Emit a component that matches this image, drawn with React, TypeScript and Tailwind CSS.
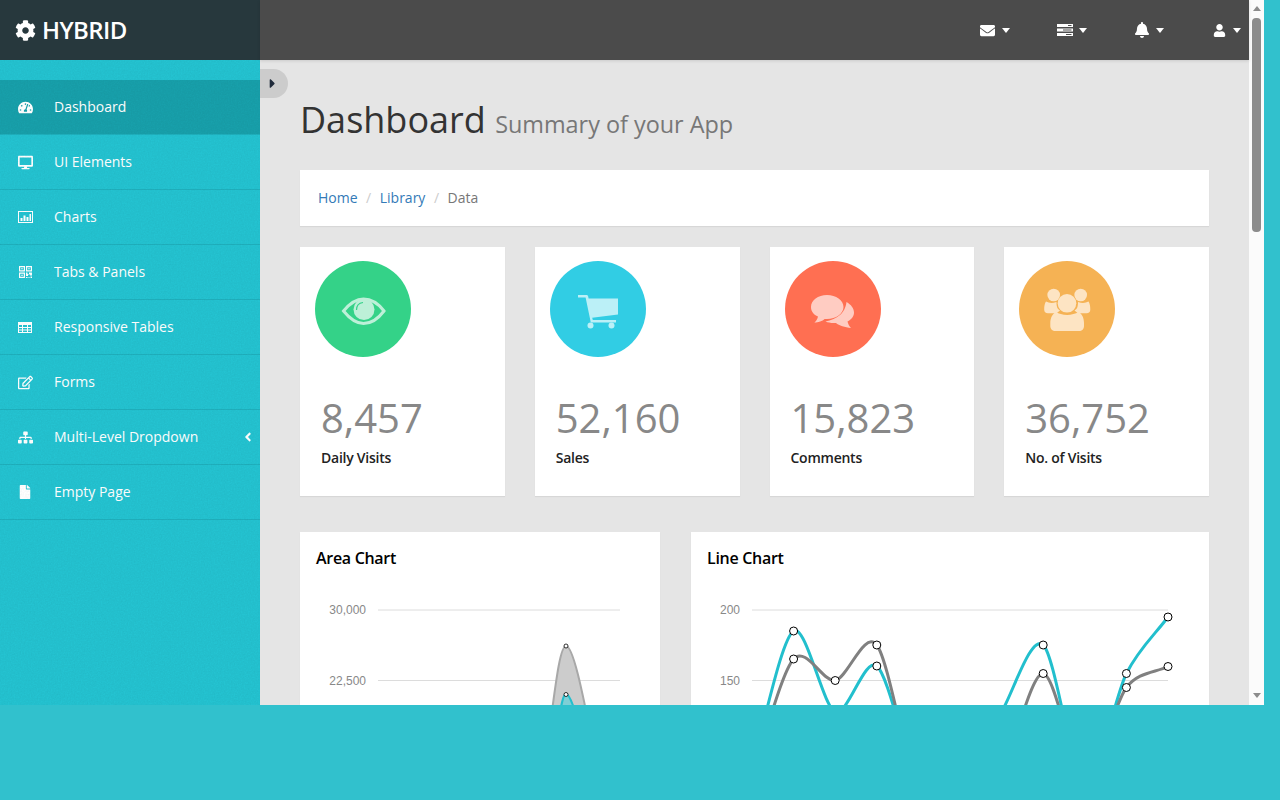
import {
  FaAngleLeft,
  FaBell,
  FaCaretRight,
  FaCog,
  FaDesktop,
  FaEnvelope,
  FaFile,
  FaRegEdit,
  FaSitemap,
  FaTachometerAlt,
  FaUser,
} from 'react-icons/fa';
import type { ReactNode } from 'react';

const BarsIcon = () => (
  <svg viewBox="0 0 15 12" className="w-[15px] h-3" fill="#fff">
    <path fillRule="evenodd" d="M0 0H15V12H0ZM1 1V11H14V1Z" />
    <path d="M2.500 7H4.500V10H2.500ZM5.500 4.500H7.500V10H5.500ZM8.500 6H10.500V10H8.500ZM11.500 3H13V10H11.500Z" />
  </svg>
);

const QrIcon = () => (
  <svg viewBox="0 0 13 12" className="w-[13px] h-3 ml-px" fill="#fff">
    <path fillRule="evenodd" d="M0 0H6V5.500H0ZM1.200 1.200V4.300H4.800V1.200ZM7 0H13V5.500H7ZM8.200 1.200V4.300H11.800V1.200ZM0 6.500H6V12H0ZM1.200 7.700V10.800H4.800V7.700Z" />
    <path d="M2.200 2.200H3.800V3.300H2.200ZM9.200 2.200H10.800V3.300H9.200ZM2.200 8.700H3.800V9.800H2.200ZM7 6.500H8.500V8H10V6.500H13V9.500H11V8.500H9V10H7ZM7 11H8.500V12H7ZM9.500 11H10.500V12H9.500ZM11.500 10.500H13V12H11.500Z" />
  </svg>
);

const GridIcon = () => (
  <svg viewBox="0 0 14 11" className="w-[14px] h-[11px]" fill="#fff">
    <path fillRule="evenodd" d="M0 0H14V11H0ZM1 3V5H4V3ZM5 3V5H9V3ZM10 3V5H13V3ZM1 6V7.500H4V6ZM5 6V7.500H9V6ZM10 6V7.500H13V6ZM1 8.500V10H4V8.500ZM5 8.500V10H9V8.500ZM10 8.500V10H13V8.500Z" />
  </svg>
);

const menu = [
  { label: 'Dashboard', icon: <FaTachometerAlt />, active: true },
  { label: 'UI Elements', icon: <FaDesktop /> },
  { label: 'Charts', icon: <BarsIcon /> },
  { label: 'Tabs & Panels', icon: <QrIcon /> },
  { label: 'Responsive Tables', icon: <GridIcon /> },
  { label: 'Forms', icon: <FaRegEdit /> },
  { label: 'Multi-Level Dropdown', icon: <FaSitemap />, more: true },
  { label: 'Empty Page', icon: <FaFile className="text-[14px]" /> },
];

const EyeIcon = () => (
  <svg viewBox="0 0 96 96" className="w-24 h-24">
    <path d="M28.500 50C35 42 41 38 48.500 38C56 38 63 42 69 50C63 58 56 62.500 48.500 62.500C41 62.500 35 58 28.500 50Z" fill="none" stroke="#bdf0d8" strokeWidth="3" />
    <circle cx="49" cy="48.500" r="10.500" fill="#bdf0d8" />
    <path d="M41.500 49C41.500 45 44 42 48 41.500" fill="none" stroke="#34d288" strokeWidth="1.200" />
  </svg>
);

const CartIcon = () => (
  <svg viewBox="0 0 96 96" className="w-24 h-24" fill="#bbf0f7">
    <path d="M28 34H36.500C37.500 34 38 34.600 38.200 35.500L38.600 37.500L68 37.500V53.500L42.200 56.800L42.800 59H66V61.500H40.800L35.600 36.500H28Z" />
    <circle cx="40.500" cy="64.500" r="3" />
    <circle cx="61.500" cy="64.500" r="3" />
  </svg>
);

const ChatIcon = () => (
  <svg viewBox="0 0 96 96" className="w-24 h-24" fill="#ffccc2">
    <path d="M42 34C33 34 26 39 26 46C26 50.500 28.800 53.800 33 55.600C32.600 58 31 60.400 29.400 61.600C33 61.600 37.600 60.200 39.600 58C40.600 58 41.200 58 42 58C51 58 58.500 52.500 58.500 46C58.500 39 51 34 42 34Z" />
    <path d="M61.500 41C60.800 48 57 54.500 48.500 58C46 59 43 60 40.500 60.600C43.500 61.800 47 62.400 51 62C54 64.500 60 66.500 66 67C64.500 65.500 63 63 62.500 60.500C66.500 58.500 69 55.500 69 51.500C69 47.500 66 43.500 61.500 41Z" />
  </svg>
);

const PeopleIcon = () => (
  <svg viewBox="0 0 96 96" className="w-24 h-24" fill="#fde4c3">
    <circle cx="34.700" cy="34" r="6.300" />
    <circle cx="61.700" cy="34" r="6.300" />
    <path d="M27 40.500C30 42 33 42.500 37.500 41C37.500 45 38 48 41 49.500L37.500 52.300H29C26.500 52.300 25.200 51 25.200 48.500C25.200 45 25.700 42.500 27 40.500Z" />
    <path d="M69.500 40.500C66.500 42 63.500 42.500 59 41C59 45 58.500 48 55.500 49.500L59 52.300H67.500C70 52.300 71.300 51 71.300 48.500C71.300 45 70.800 42.500 69.500 40.500Z" />
    <circle cx="48" cy="42.300" r="9.300" />
    <path d="M37 50.800C42 55 54 55 59.500 50.800C63 53 65 57 65 62V65C65 68 63 70 60 70H36.500C33.500 70 31.300 68 31.300 65V62C31.300 57 33.500 53 37 50.800Z" />
  </svg>
);

const stats = [
  { value: '8,457', label: 'Daily Visits', color: 'bg-[#34d288]', icon: <EyeIcon /> },
  { value: '52,160', label: 'Sales', color: 'bg-[#31cde4]', icon: <CartIcon /> },
  { value: '15,823', label: 'Comments', color: 'bg-[#ff6f52]', icon: <ChatIcon /> },
  { value: '36,752', label: 'No. of Visits', color: 'bg-[#f5b254]', icon: <PeopleIcon /> },
];

// same curve maths as morris: tangent from the neighbours, handles part way in
function smooth(pts: number[][]) {
  let d = `M${pts[0][0]} ${pts[0][1]}`;
  const grad = (i: number) => {
    const a = pts[Math.max(i - 1, 0)];
    const b = pts[Math.min(i + 1, pts.length - 1)];
    return (b[1] - a[1]) / (b[0] - a[0]);
  };
  for (let i = 1; i < pts.length; i++) {
    const [x0, y0] = pts[i - 1];
    const [x1, y1] = pts[i];
    const ix = (x1 - x0) / 3.4;
    d += `C${x0 + ix} ${y0 + grad(i - 1) * ix} ${x1 - ix} ${y1 - grad(i) * ix} ${x1} ${y1}`;
  }
  return d;
}

const xs = [752, 793.6, 835.2, 876.8, 918.4, 960, 1001.6, 1043.2, 1084.8, 1126.4, 1168];
const tealY = [765, 631, 712, 666, 780, 790, 712, 645, 785, 673.5, 617];
const grayY = [775, 659, 680.5, 645, 790, 800, 770, 673.5, 775, 687.5, 666.5];
const toPts = (ys: number[]) => ys.map((y, i) => [xs[i], y]);

const AreaChart = () => (
  <svg width="360" height="240" viewBox="300 532 360 240" className="block absolute left-0 top-0">
    <g fontFamily="'Liberation Sans', sans-serif" fontSize="12" fill="#888" textAnchor="end">
      <text x="366" y="614">30,000</text>
      <text x="366" y="685">22,500</text>
    </g>
    <path d="M378 610H620M378 680.500H620" stroke="#dcdcdc" strokeWidth="1" />
    <path d="M548 740C554 700 559 646 566 646C573 646 582 690 592 740Z" fill="#cccccc" />
    <path d="M548 740C554 700 559 646 566 646C573 646 582 690 592 740" fill="none" stroke="#a8a8a8" strokeWidth="2" />
    <path d="M557 730C561 705 563 694 566 694C569 694 574 705 580 730Z" fill="#7fcfd6" />
    <path d="M557 730C561 705 563 694 566 694C569 694 574 705 580 730" fill="none" stroke="#22bfcd" strokeWidth="2" />
    <circle cx="566" cy="646" r="2" fill="#fff" stroke="#000" strokeWidth="0.800" />
    <circle cx="566" cy="694.500" r="2" fill="#fff" stroke="#000" strokeWidth="0.800" />
  </svg>
);

const LineChart = () => (
  <svg width="518" height="240" viewBox="691 532 518 240" className="block absolute left-0 top-0">
    <g fontFamily="'Liberation Sans', sans-serif" fontSize="12" fill="#888" textAnchor="end">
      <text x="740" y="614">200</text>
      <text x="740" y="685">150</text>
    </g>
    <path d="M752 610H1168M752 680.500H1168" stroke="#dcdcdc" strokeWidth="1" />
    <path d={smooth(toPts(tealY))} fill="none" stroke="#22bfcd" strokeWidth="3" />
    <path d={smooth(toPts(grayY))} fill="none" stroke="#808080" strokeWidth="3" />
    {[...toPts(tealY), ...toPts(grayY)].map(([x, y], i) => (
      <circle key={i} cx={x} cy={y} r="4" fill="#fff" stroke="#000" strokeWidth="1" />
    ))}
  </svg>
);

const Caret = () => <span className="w-0 h-0 border-x-[4.5px] border-t-[5px] border-x-transparent border-t-white" />;

const TasksIcon = () => (
  <svg viewBox="0 0 16 12" className="w-4 h-3 -mr-px" fill="#fff">
    <path fillRule="evenodd" d="M0 0H16V3H0ZM11 1H14.500V2H11ZM0 4.500H16V7.500H0ZM6 5.500H14.500V6.500H6ZM0 9H16V12H0ZM9 10H14.500V11H9Z" />
  </svg>
);

function TopItem({ children }: { children: ReactNode }) {
  return (
    <div className="w-[78px] flex items-center gap-[7px] text-white text-[15px]">
      {children}
      <Caret />
    </div>
  );
}

function ChartCard({ title, className, children }: { title: string; className: string; children: ReactNode }) {
  return (
    <div className={`bg-white shadow-[0_1px_1px_rgba(0,0,0,0.06)] h-[300px] shrink-0 relative ${className}`}>
      {children}
      <h3 className="absolute left-[16px] top-[14px] text-base leading-6 font-semibold tracking-[-0.3px] text-black">{title}</h3>
    </div>
  );
}

export default function App() {
  return (
    <div className="h-screen bg-[#31c1cd] font-['Open_Sans',sans-serif]">
      <div className="w-[1264px] h-[705px] flex overflow-hidden">
        <aside className="w-[260px] shrink-0 bg-[#24c3d1] text-white flex flex-col">
          <div className="h-[60px] shrink-0 bg-[#27383d] flex items-center pl-[15px] gap-[6px]">
            <FaCog className="text-[21px]" />
            <span className="text-2xl font-semibold tracking-[-0.6px]">HYBRID</span>
          </div>
          <nav className="pt-5 flex-1 relative">
            {menu.map((m) => (
              <div
                key={m.label}
                className={`h-[55px] flex items-center pl-[18px] pr-[5px] text-sm border-b ${
                  m.active ? 'bg-[#18a0ab] border-[#1fb0bd]' : 'border-[#1fb0bd]'
                }`}
              >
                <span className="w-[16px] text-[15px] flex">{m.icon}</span>
                <span className="ml-[20px] flex-1">{m.label}</span>
                {m.more && <FaAngleLeft className="text-[14px]" />}
              </div>
            ))}
            {/* paper grain of the sidebar */}
            <svg className="absolute inset-0 w-full h-full pointer-events-none opacity-[0.04]">
              <filter id="grain">
                <feTurbulence type="fractalNoise" baseFrequency="0.7" numOctaves="2" seed="4" />
                <feColorMatrix values="0 0 0 0 0  0 0 0 0 0  0 0 0 0 0  1.6 0 0 0 -0.4" />
              </filter>
              <rect width="100%" height="100%" filter="url(#grain)" />
            </svg>
          </nav>
        </aside>

        <div className="w-[989px] shrink-0 flex flex-col bg-[#e5e5e5]">
          <header className="h-[60px] shrink-0 bg-[#4b4b4b] flex items-center justify-end pr-[6px] shadow-[0_1px_3px_rgba(0,0,0,0.12)] relative">
            <TopItem><FaEnvelope className="ml-px" /></TopItem>
            <TopItem><TasksIcon /></TopItem>
            <TopItem><FaBell className="text-[16px] -ml-px -mr-px" /></TopItem>
            <div className="w-[30px] flex items-center gap-[7px] text-white">
              <FaUser className="text-[13px]" />
              <Caret />
            </div>
          </header>

          <main className="flex-1 overflow-hidden relative px-10">
            <div className="absolute left-0 top-[9px] w-[28px] h-[29px] rounded-r-full bg-[#cccccc] flex items-center pl-[5px] text-[#1f2a3a] text-[15px]">
              <FaCaretRight />
            </div>

            <h1 className="pt-[37px] h-[110px] text-[36px] leading-[46px] text-[#333] whitespace-nowrap">
              Dashboard <small className="text-[23.4px] text-[#777]">Summary of your App</small>
            </h1>

            <div className="h-[56px] bg-white shadow-[0_1px_1px_rgba(0,0,0,0.06)] flex items-center px-[18px] text-sm">
              <span className="text-[#337ab7]">Home</span>
              <span className="text-[#ccc] px-[8.5px]">/</span>
              <span className="text-[#337ab7]">Library</span>
              <span className="text-[#ccc] px-[8.5px]">/</span>
              <span className="text-[#777]">Data</span>
            </div>

            <div className="grid grid-cols-4 gap-[30px] mt-[21px]">
              {stats.map((s) => (
                <div key={s.label} className="h-[249px] bg-white shadow-[0_1px_1px_rgba(0,0,0,0.06)] pt-[14px] pl-[15px]">
                  <div className={`w-24 h-24 rounded-full ${s.color}`}>{s.icon}</div>
                  <div className="pl-[6px] mt-[33px] text-[40px] leading-[55px] text-[#888]">{s.value}</div>
                  <div className="pl-[6px] mt-[3px] text-sm leading-5 font-semibold tracking-[-0.25px] text-[#222]">{s.label}</div>
                </div>
              ))}
            </div>

            <div className="flex gap-[31px] mt-9">
              <ChartCard title="Area Chart" className="w-[360px]"><AreaChart /></ChartCard>
              <ChartCard title="Line Chart" className="w-[518px]"><LineChart /></ChartCard>
            </div>
          </main>
        </div>

        <div className="w-[15px] shrink-0 bg-[#fbfbfb] flex flex-col items-center pt-[6px]">
          <span className="w-0 h-0 border-x-[4.5px] border-b-[5px] border-x-transparent border-b-[#8c8c8c]" />
          <div className="w-[9px] h-[214px] mt-[7px] rounded-[4px] bg-[#8c8c8c]" />
          <span className="mt-[461px] w-0 h-0 border-x-[4.5px] border-t-[5px] border-x-transparent border-t-[#8c8c8c]" />
        </div>
      </div>
    </div>
  );
}
